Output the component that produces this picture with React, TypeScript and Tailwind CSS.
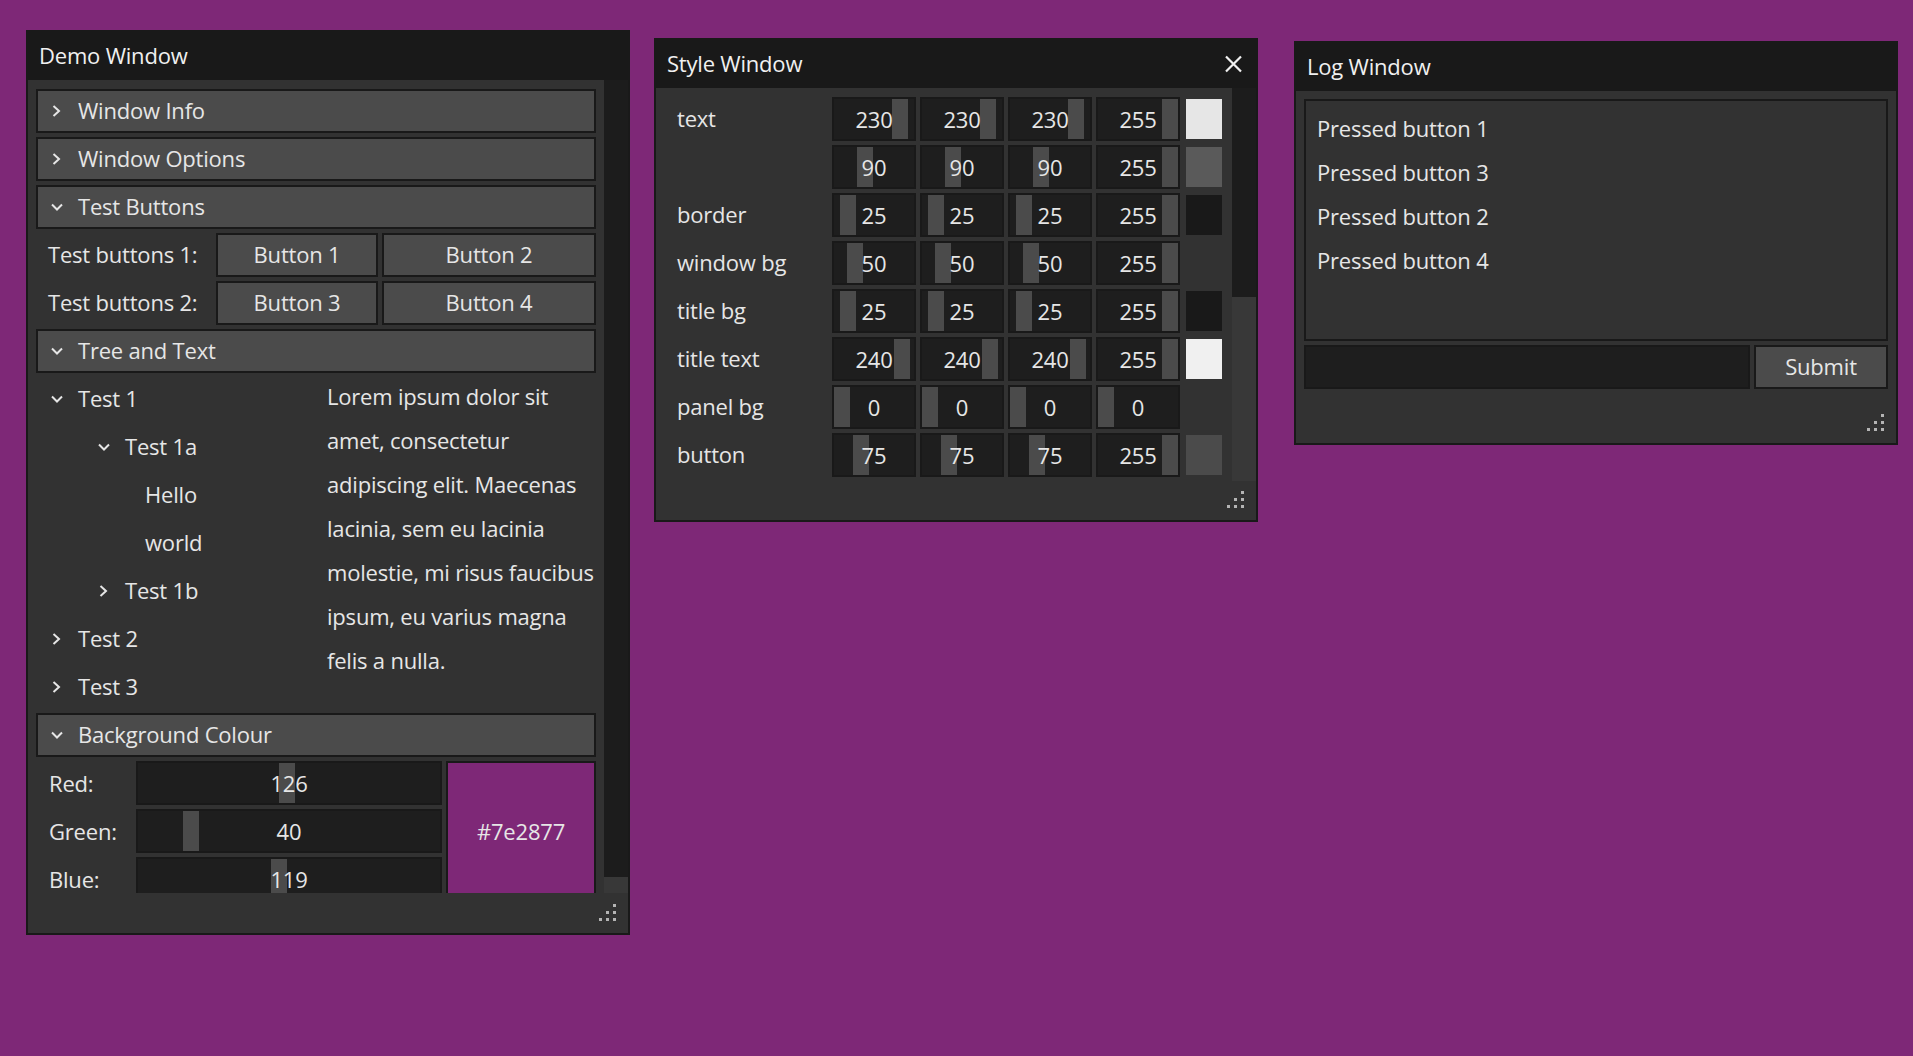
import React from 'react';

const ChevronRight = () => (
  <svg width="10" height="14" viewBox="0 0 10 14" className="block ml-px">
    <polyline points="2.5,2 8,7 2.5,12" fill="none" stroke="#e6e6e6" strokeWidth="2" />
  </svg>
);

const ChevronDown = () => (
  <svg width="14" height="10" viewBox="0 0 14 10" className="block">
    <polyline points="2,2.5 7,7.5 12,2.5" fill="none" stroke="#e6e6e6" strokeWidth="2" />
  </svg>
);

const CloseIcon = () => (
  <svg width="19" height="18" viewBox="0 0 19 18" className="block">
    <path d="M2 1.5 L17 16.5 M17 1.5 L2 16.5" stroke="#f0f0f0" strokeWidth="2.2" fill="none" />
  </svg>
);

const Grip = () => (
  <svg width="17" height="17" viewBox="0 0 17 17" className="block">
    {[
      [14, 0],
      [7, 7],
      [14, 7],
      [0, 14],
      [7, 14],
      [14, 14],
    ].map(([x, y], i) => (
      <rect key={i} x={x} y={y} width="3" height="3" fill="#b4b4b4" />
    ))}
  </svg>
);

type WindowProps = {
  pos: string;
  title: string;
  closable?: boolean;
  children: React.ReactNode;
};

const Window = ({ pos, title, closable, children }: WindowProps) => (
  <div className={`absolute flex flex-col w-[604px] border-2 border-[#191919] bg-[#323232] ${pos}`}>
    <div className="h-[48px] shrink-0 bg-[#191919] flex items-center justify-between pl-[11px] pr-[13px] pb-px text-[#f0f0f0]">
      <span>{title}</span>
      {closable && <CloseIcon />}
    </div>
    {children}
  </div>
);

const ScrollBody = ({ h, thumb, children }: { h: string; thumb: string; children: React.ReactNode }) => (
  <div className={`flex shrink-0 ${h}`}>
    <div className="flex-1 overflow-hidden">{children}</div>
    <div className="w-[24px] flex flex-col">
      <div className={`bg-[#1c1c1c] ${thumb}`} />
      <div className="flex-1 bg-[#383838]" />
    </div>
  </div>
);

const Footer = () => (
  <div className="flex-1 flex justify-end items-end pr-[12px] pb-[12px]">
    <Grip />
  </div>
);

const Header = ({ label, open }: { label: string; open?: boolean }) => (
  <div className="h-[44px] shrink-0 border-2 border-[#191919] bg-[#4b4b4b] flex items-center pl-[12px] pb-px">
    <span className="w-[28px] flex">{open ? <ChevronDown /> : <ChevronRight />}</span>
    <span>{label}</span>
  </div>
);

const Button = ({ label, w }: { label: string; w: string }) => (
  <div className={`h-[44px] border-2 border-[#191919] bg-[#4b4b4b] flex items-center justify-center pb-px ${w}`}>
    {label}
  </div>
);

const Slider = ({ value, w, travel }: { value: number; w: string; travel: number }) => (
  <div className={`relative h-[44px] border-2 border-[#191919] bg-[#1e1e1e] flex items-center justify-center ${w}`}>
    <div
      className="absolute top-0 bottom-0 w-[16px] bg-[#4b4b4b]"
      style={{ left: Math.round((value / 255) * travel) }}
    />
    <span className="relative">{value}</span>
  </div>
);

const tree = [
  { label: 'Test 1', node: true, open: true, pad: 'pl-[14px]' },
  { label: 'Test 1a', node: true, open: true, pad: 'pl-[61px]' },
  { label: 'Hello', node: false, open: false, pad: 'pl-[109px]' },
  { label: 'world', node: false, open: false, pad: 'pl-[109px]' },
  { label: 'Test 1b', node: true, open: false, pad: 'pl-[61px]' },
  { label: 'Test 2', node: true, open: false, pad: 'pl-[14px]' },
  { label: 'Test 3', node: true, open: false, pad: 'pl-[14px]' },
];

const lorem = [
  'Lorem ipsum dolor sit',
  'amet, consectetur',
  'adipiscing elit. Maecenas',
  'lacinia, sem eu lacinia',
  'molestie, mi risus faucibus',
  'ipsum, eu varius magna',
  'felis a nulla.',
];

const colours = [
  { label: 'Red:', value: 126 },
  { label: 'Green:', value: 40 },
  { label: 'Blue:', value: 119 },
];

const styleRows = [
  { label: 'text', values: [230, 230, 230, 255], swatch: 'bg-[#e6e6e6]' },
  { label: '', values: [90, 90, 90, 255], swatch: 'bg-[#5a5a5a]' },
  { label: 'border', values: [25, 25, 25, 255], swatch: 'bg-[#191919]' },
  { label: 'window bg', values: [50, 50, 50, 255], swatch: 'bg-[#323232]' },
  { label: 'title bg', values: [25, 25, 25, 255], swatch: 'bg-[#191919]' },
  { label: 'title text', values: [240, 240, 240, 255], swatch: 'bg-[#f0f0f0]' },
  { label: 'panel bg', values: [0, 0, 0, 0], swatch: 'bg-transparent' },
  { label: 'button', values: [75, 75, 75, 255], swatch: 'bg-[#4b4b4b]' },
];

const logLines = ['Pressed button 1', 'Pressed button 3', 'Pressed button 2', 'Pressed button 4'];

const DemoWindow = () => (
  <Window pos="left-[26px] top-[30px] h-[905px]" title="Demo Window">
    <ScrollBody h="h-[813px]" thumb="h-[797px]">
      <div className="flex flex-col gap-[4px] pt-[9px] px-[8px]">
        <Header label="Window Info" />
        <Header label="Window Options" />
        <Header label="Test Buttons" open />
        <div className="h-[44px] flex items-center gap-[4px]">
          <span className="w-[176px] pl-[12px] pb-px">Test buttons 1:</span>
          <Button label="Button 1" w="w-[162px]" />
          <Button label="Button 2" w="w-[214px]" />
        </div>
        <div className="h-[44px] flex items-center gap-[4px]">
          <span className="w-[176px] pl-[12px] pb-px">Test buttons 2:</span>
          <Button label="Button 3" w="w-[162px]" />
          <Button label="Button 4" w="w-[214px]" />
        </div>
        <Header label="Tree and Text" open />
        <div className="flex">
          <div className="w-[291px] flex flex-col gap-[4px]">
            {tree.map((t) => (
              <div key={t.label} className={`h-[44px] flex items-center pb-px ${t.pad}`}>
                {t.node && (
                  <span className="w-[28px] flex">{t.open ? <ChevronDown /> : <ChevronRight />}</span>
                )}
                <span>{t.label}</span>
              </div>
            ))}
          </div>
          <div className="flex-1 leading-[44px] -mt-[3px] whitespace-nowrap">
            {lorem.map((l) => (
              <div key={l}>{l}</div>
            ))}
          </div>
        </div>
        <Header label="Background Colour" open />
        <div className="flex gap-[4px]">
          <div className="flex flex-col gap-[4px]">
            {colours.map((c) => (
              <div key={c.label} className="h-[44px] flex items-center">
                <span className="w-[100px] pl-[13px]">{c.label}</span>
                <Slider value={c.value} w="w-[306px]" travel={286} />
              </div>
            ))}
          </div>
          <div className="w-[150px] h-[140px] border-2 border-[#191919] bg-[#7e2877] flex items-center justify-center">
            #7e2877
          </div>
        </div>
      </div>
    </ScrollBody>
    <Footer />
  </Window>
);

const StyleWindow = () => (
  <Window pos="left-[654px] top-[38px] h-[484px]" title="Style Window" closable>
    <ScrollBody h="h-[393px]" thumb="h-[209px]">
      <div className="flex flex-col gap-[4px] pt-[9px]">
        {styleRows.map((r, i) => (
          <div key={i} className="h-[44px] flex items-center">
            <span className="w-[176px] pl-[21px] pb-px">{r.label}</span>
            <div className="flex gap-[4px]">
              {r.values.map((v, j) => (
                <Slider key={j} value={v} w="w-[84px]" travel={64} />
              ))}
            </div>
            <div className={`ml-[6px] w-[36px] h-[40px] ${r.swatch}`} />
          </div>
        ))}
      </div>
    </ScrollBody>
    <Footer />
  </Window>
);

const LogWindow = () => (
  <Window pos="left-[1294px] top-[41px] h-[404px]" title="Log Window">
    <div className="flex flex-col gap-[4px] pt-[8px] px-[8px]">
      <div className="h-[242px] border-2 border-[#191919] bg-[#323232] pt-[5px] pl-[11px] leading-[44px]">
        {logLines.map((l) => (
          <div key={l}>{l}</div>
        ))}
      </div>
      <div className="h-[44px] flex gap-[4px]">
        <div className="flex-1 border-2 border-[#191919] bg-[#1e1e1e]" />
        <Button label="Submit" w="w-[134px]" />
      </div>
    </div>
    <Footer />
  </Window>
);

export default function App() {
  return (
    <div className="relative w-screen h-screen overflow-hidden bg-[#7e2877] font-['Open_Sans',sans-serif] text-[22px] tracking-[-0.2px] text-[#e6e6e6]">
      <DemoWindow />
      <StyleWindow />
      <LogWindow />
    </div>
  );
}
